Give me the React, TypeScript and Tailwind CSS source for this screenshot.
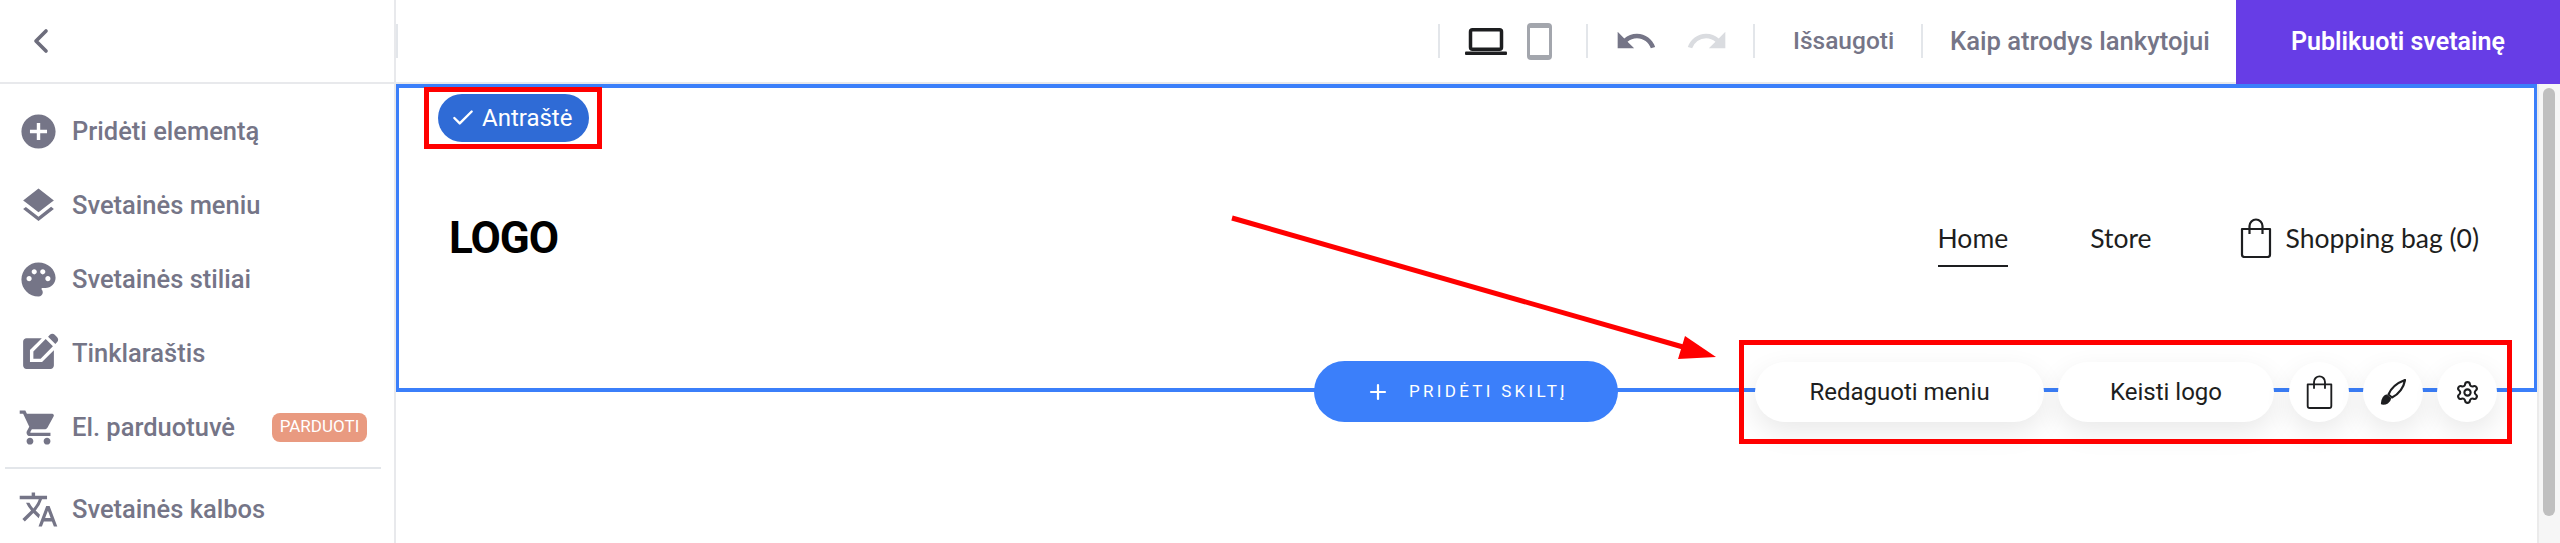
import React from 'react';
import { ChevronLeft, Check, Plus, Settings } from 'lucide-react';
import {
  MdAddCircle,
  MdLayers,
  MdPalette,
  MdEditSquare,
  MdShoppingCart,
  MdTranslate,
  MdUndo,
  MdRedo,
} from 'react-icons/md';

const uiFont = 'font-["Roboto",sans-serif]';

function BagIcon({ className }: { className?: string }) {
  return (
    <svg viewBox="0 0 32 40" fill="none" stroke="currentColor" strokeWidth="2.2" strokeLinejoin="round" className={className}>
      <path d="M2 11h28v25.5a2.5 2.5 0 0 1-2.5 2.5h-23A2.5 2.5 0 0 1 2 36.500V11z" />
      <path d="M9.500 16V8a6.500 6.500 0 0 1 13 0v8" />
    </svg>
  );
}

function BrushIcon({ className }: { className?: string }) {
  return (
    <svg viewBox="0 0 26 26" fill="none" stroke="currentColor" strokeWidth="2.2" strokeLinejoin="round" className={className}>
      <path d="M25 1C24 8 19 15 12 18.500L8.500 15.500C11 9 17 4 25 1z" />
      <path d="M6.500 16.500L10 19.500C9.500 23 6 25 2 24.500C2.500 21 2.500 18 6.500 16.500z" fill="currentColor" />
    </svg>
  );
}

function LaptopIcon() {
  return (
    <svg viewBox="0 0 42 27" className="w-[42px] h-[27px] text-[#1d1e20]" fill="none" stroke="currentColor">
      <rect x="5.500" y="1.750" width="31" height="19.500" rx="2" strokeWidth="3.500" />
      <rect x="0" y="23.500" width="42" height="3.500" rx="1" fill="currentColor" stroke="none" />
    </svg>
  );
}

function PhoneIcon() {
  return (
    <div className="w-[25px] h-[37px] rounded-[4px] bg-[#a3a6ad] px-[3px] py-[5px]">
      <div className="w-full h-full bg-white" />
    </div>
  );
}

const menuItems = [
  { label: 'Pridėti elementą', icon: MdAddCircle },
  { label: 'Svetainės meniu', icon: MdLayers },
  { label: 'Svetainės stiliai', icon: MdPalette },
  { label: 'Tinklaraštis', icon: MdEditSquare },
  { label: 'El. parduotuvė', icon: MdShoppingCart, badge: 'PARDUOTI' },
];

function SideRow({ label, icon: Icon, badge }: { label: string; icon: React.ComponentType<{ className?: string }>; badge?: string }) {
  return (
    <div className="h-[74px] shrink-0 flex items-center pl-[18px]">
      <Icon className="w-[41px] h-[41px] text-[#757587] shrink-0" />
      <span className="ml-[13px] text-[25.500px] font-medium text-[#757587]">{label}</span>
      {badge && (
        <span className="absolute left-[272px] w-[95px] h-[29px] rounded-[8px] bg-[#e99a80] text-white text-[17px] flex items-center justify-center">
          {badge}
        </span>
      )}
    </div>
  );
}

function Sidebar() {
  return (
    <aside className="w-[396px] shrink-0 border-r-2 border-[#e8e9ec] flex flex-col">
      <div className="h-[84px] shrink-0 border-b-2 border-[#e8e9ec] flex items-center pl-[21px]">
        <ChevronLeft className="w-[40px] h-[40px] text-[#6d6d7c]" strokeWidth={2.2} />
      </div>
      <div className="pt-[10px] flex flex-col relative">
        {menuItems.map((item) => (
          <SideRow key={item.label} {...item} />
        ))}
        <div className="ml-[5px] mr-[13px] mt-[3px] h-[2px] shrink-0 bg-[#e3e6ea]" />
        <div className="mt-[3px]">
          <SideRow label="Svetainės kalbos" icon={MdTranslate} />
        </div>
      </div>
    </aside>
  );
}

function TopBar() {
  return (
    <header className="h-[84px] shrink-0 border-b-2 border-[#e8e9ec] flex justify-end relative">
      <div className="absolute left-0 top-[24px] h-[34px] w-[2px] bg-[#e3e6ea]" />
      <div className="flex items-center">
        <div className="w-[148px] h-[34px] border-l-2 border-[#e3e6ea] flex items-center gap-[20px] pl-[25px]">
          <LaptopIcon />
          <PhoneIcon />
        </div>
        <div className="w-[167px] h-[34px] border-l-2 border-[#e3e6ea] flex items-center gap-[28px] pl-[26px]">
          <MdUndo className="w-[44px] h-[44px] shrink-0 text-[#757587]" />
          <MdRedo className="w-[44px] h-[44px] shrink-0 text-[#dadce0] -ml-[1px]" />
        </div>
        <div className="w-[168px] h-[34px] border-l-2 border-[#e3e6ea] flex items-center pl-[38px] text-[24.500px] font-medium text-[#757587]">
          Išsaugoti
        </div>
        <div className="w-[315px] h-[34px] border-l-2 border-[#e3e6ea] flex items-center pl-[27px] text-[25.600px] font-medium text-[#757587]">
          Kaip atrodys lankytojui
        </div>
      </div>
      <button className="w-[324px] h-[84px] bg-[#673de6] text-white text-[25px] font-semibold">Publikuoti svetainę</button>
    </header>
  );
}

function SiteHeader() {
  return (
    <section className="relative h-[308px] border-[3px] border-y-4 border-[#3b7ffa] flex items-center justify-between pl-[50px] pr-[55px]">
      <div className="absolute left-[39px] top-[6px] h-[48px] w-[151px] rounded-full bg-[#2f6bd6] flex items-center pl-[12px] gap-[6px] text-white text-[24px]">
        <Check className="w-[26px] h-[26px]" strokeWidth={2.2} />
        Antraštė
      </div>
      <div className='text-[44px] font-bold text-black font-["Roboto",sans-serif] tracking-[-1px]'>LOGO</div>
      <nav className='mt-[2px] flex items-center font-["Lato",sans-serif] text-[26.500px] text-[#1d1e20]'>
        <a className="py-[6px] border-y-2 border-t-transparent border-b-[#1d1e20]">Home</a>
        <a className="ml-[82px]">Store</a>
        <BagIcon className="ml-[88px] w-[32px] h-[40px] -mt-[2px]" />
        <a className="ml-[14px]">Shopping bag (0)</a>
      </nav>
    </section>
  );
}

function SectionControls() {
  const pill = 'h-[60px] bg-white rounded-full shadow-[0_10px_28px_rgba(0,0,0,0.09)] flex items-center justify-center text-[24px] text-[#1d1e20]';
  return (
    <>
      <button className="absolute left-[918px] top-[277px] w-[304px] h-[61px] rounded-full bg-[#3b7ffa] text-white flex items-center justify-center gap-[19px] pl-[2px] text-[17px] tracking-[3.300px]">
        <Plus className="w-[24px] h-[24px]" strokeWidth={2.2} />
        PRIDĖTI SKILTĮ
      </button>
      <div className="absolute left-[1359px] top-[278px] flex gap-[14px]">
        <button className={`${pill} w-[289px]`}>Redaguoti meniu</button>
        <button className={`${pill} w-[216px]`}>Keisti logo</button>
        <button className={`${pill} w-[60px] ml-[1px]`}>
          <BagIcon className="w-[27px] h-[34px]" />
        </button>
        <button className={`${pill} w-[60px]`}>
          <BrushIcon className="w-[26px] h-[26px]" />
        </button>
        <button className={`${pill} w-[60px]`}>
          <Settings className="w-[25px] h-[25px]" strokeWidth={2} />
        </button>
      </div>
    </>
  );
}

function Annotations() {
  return (
    <>
      <div className="absolute left-[424px] top-[87px] w-[178px] h-[62px] border-[5px] border-[#ff0000]" />
      <div className="absolute left-[1739px] top-[340px] w-[773px] h-[104px] border-[5px] border-[#ff0000]" />
      <svg className="absolute left-0 top-0 w-[2560px] h-[543px] pointer-events-none" viewBox="0 0 2560 543">
        <line x1="1232" y1="218" x2="1690" y2="349" stroke="#ff0000" strokeWidth="5" />
        <polygon points="1685,336 1716,357 1678,359" fill="#ff0000" />
      </svg>
    </>
  );
}

export default function App() {
  return (
    <div className={`relative w-[2560px] h-[543px] overflow-hidden bg-white flex ${uiFont}`}>
      <Sidebar />
      <main className="flex-1 flex flex-col">
        <TopBar />
        <div className="flex-1 flex relative">
          <div className="flex-1">
            <SiteHeader />
          </div>
          <SectionControls />
          <div className="w-[23px] bg-[#f6f6f6] border-l-2 border-[#ebebeb] pl-[4px] pt-[4px]">
            <div className="w-[12px] h-[428px] rounded-full bg-[#bfbfbf]" />
          </div>
        </div>
      </main>
      <Annotations />
    </div>
  );
}
